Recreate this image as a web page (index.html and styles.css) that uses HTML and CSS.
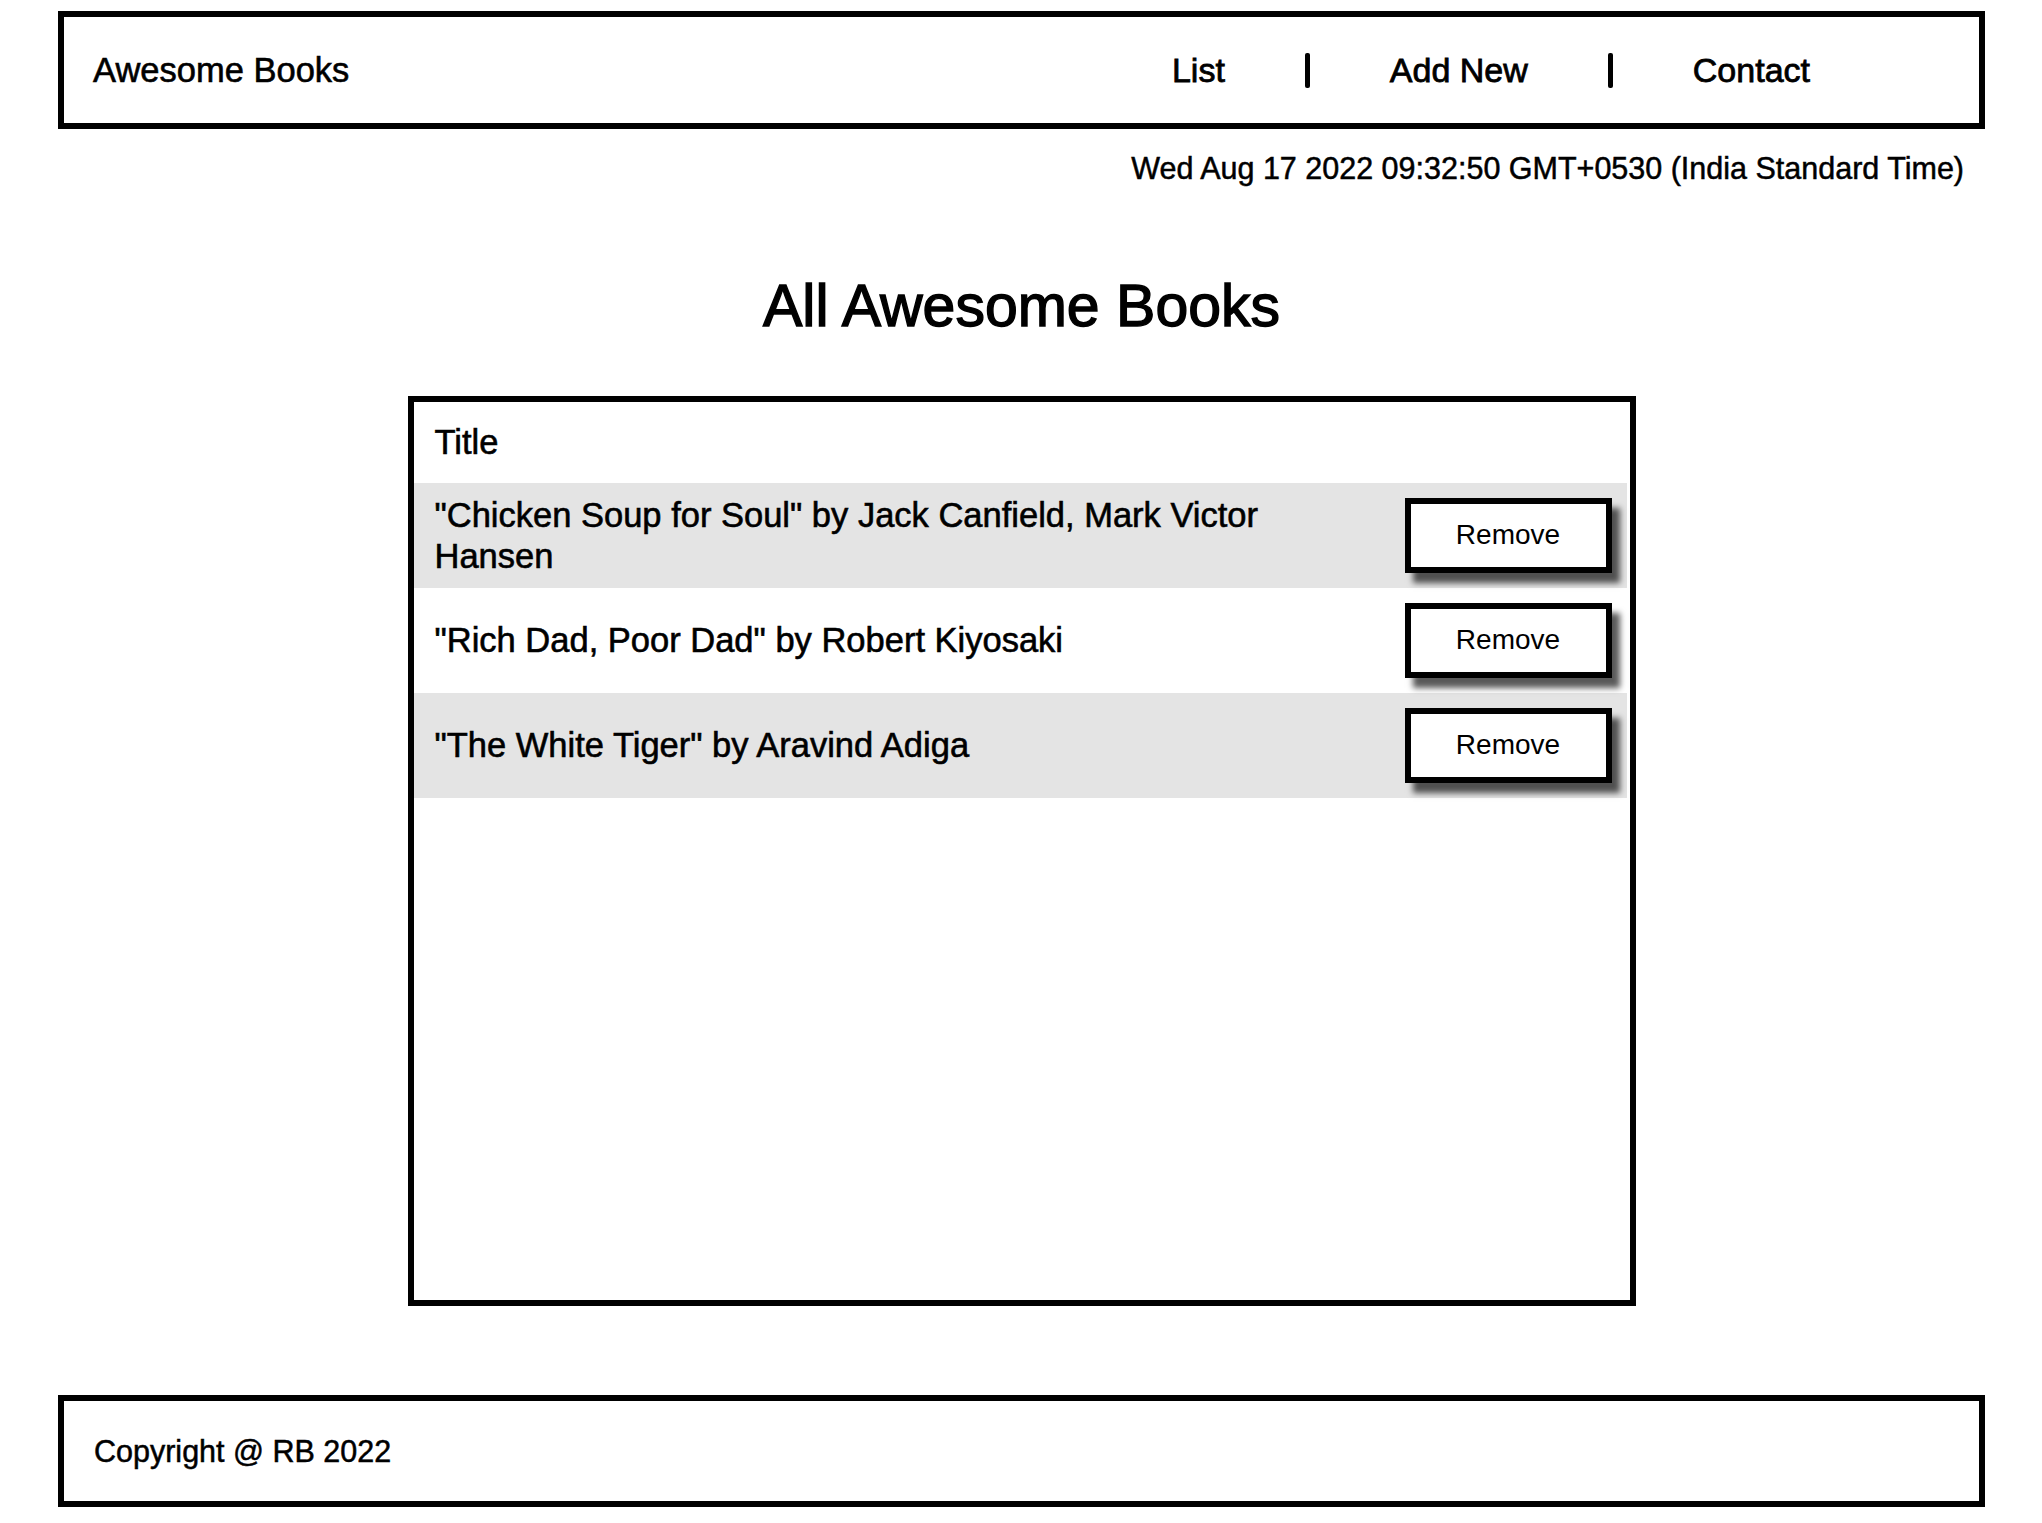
FILE: index.html
```html
<!DOCTYPE html>
<html lang="en">
<head>
<meta charset="utf-8">
<title>Awesome Books</title>
<link rel="stylesheet" href="styles.css">
</head>
<body>
<div class="page">
  <header class="topbar">
    <div class="brand">Awesome Books</div>
    <nav class="nav">
      <a class="nav-link" href="#">List</a>
      <span class="nav-sep"></span>
      <a class="nav-link" href="#">Add New</a>
      <span class="nav-sep"></span>
      <a class="nav-link" href="#">Contact</a>
    </nav>
  </header>
  <div class="date">Wed Aug 17 2022 09:32:50 GMT+0530 (India Standard Time)</div>
  <h1 class="heading">All Awesome Books</h1>
  <section class="books">
    <div class="books-head">Title</div>
    <div class="book-row alt">
      <div class="book-text">"Chicken Soup for Soul" by Jack Canfield, Mark Victor Hansen</div>
      <button class="remove-btn">Remove</button>
    </div>
    <div class="book-row">
      <div class="book-text">"Rich Dad, Poor Dad" by Robert Kiyosaki</div>
      <button class="remove-btn">Remove</button>
    </div>
    <div class="book-row alt">
      <div class="book-text">"The White Tiger" by Aravind Adiga</div>
      <button class="remove-btn">Remove</button>
    </div>
  </section>
  <footer class="footer">Copyright @ RB 2022</footer>
</div>
</body>
</html>
```
FILE: styles.css
```css
* { box-sizing: border-box; }
html, body { margin: 0; padding: 0; background: #fff; }
body {
  font-family: "Liberation Sans", Arial, sans-serif;
  color: #000;
}
.page {
  padding: 11px 57px 16px 58px;
}
.topbar {
  height: 118px;
  border: 6px solid #000;
  display: flex;
  align-items: center;
  justify-content: space-between;
  padding: 0 169px 0 29px;
}
.brand {
  font-size: 34.5px;
  line-height: 40px;
  -webkit-text-stroke: 0.6px #000;
}
.nav {
  display: flex;
  align-items: center;
  gap: 80px;
}
.nav-link {
  font-size: 34px;
  line-height: 40px;
  color: #000;
  text-decoration: none;
  -webkit-text-stroke: 0.8px #000;
}
.nav-sep {
  display: block;
  width: 5px;
  height: 35px;
  background: #000;
  border-radius: 2px;
}
.date {
  margin-top: 21px;
  text-align: right;
  padding-right: 21px;
  font-size: 30.5px;
  line-height: 36px;
  -webkit-text-stroke: 0.5px #000;
}
.heading {
  margin: 85px 0 0;
  text-align: center;
  font-size: 59px;
  line-height: 71px;
  font-weight: normal;
  -webkit-text-stroke: 1.4px #000;
}
.books {
  width: 1228px;
  height: 910px;
  margin: 54px auto 0;
  border: 6px solid #000;
}
.books-head {
  padding: 20px 21px;
  font-size: 34.5px;
  line-height: 41px;
  -webkit-text-stroke: 0.6px #000;
}
.book-row {
  height: 105px;
  display: flex;
  align-items: center;
  padding: 0 15px 0 21px;
  margin-right: 3px;
}
.book-row.alt { background: #e4e4e4; }
.book-text {
  flex: 1;
  margin-right: 80px;
  font-size: 34.5px;
  line-height: 41px;
  -webkit-text-stroke: 0.6px #000;
}
.remove-btn {
  width: 207px;
  height: 75px;
  border: 6px solid #000;
  background: #fff;
  font-family: "Liberation Sans", Arial, sans-serif;
  font-size: 28px;
  color: #000;
  padding: 0;
  margin-bottom: 1px;
  box-shadow: 8px 10px 6px rgba(0, 0, 0, 0.65);
}
.footer {
  margin-top: 89px;
  height: 112px;
  border: 6px solid #000;
  display: flex;
  align-items: center;
  padding-left: 30px;
  font-size: 30.5px;
  line-height: 36px;
  -webkit-text-stroke: 0.5px #000;
}
```
